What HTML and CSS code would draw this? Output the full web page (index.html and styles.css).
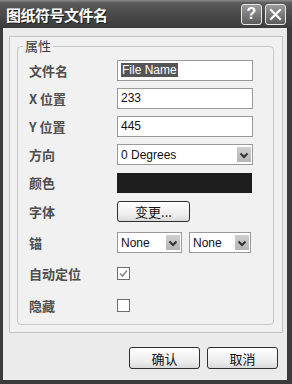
FILE: index.html
```html
<!DOCTYPE html>
<html lang="zh-CN">
<head>
    <meta charset="UTF-8">
    <meta name="viewport" content="width=device-width, initial-scale=1.0">
    <title>图纸符号文件名</title>
    <link rel="stylesheet" href="styles.css">
</head>
<body>

<div class="window">
    <div class="titlebar">
        <span class="title">图纸符号文件名</span>
        <div class="title-buttons">
            <span class="tbtn">?</span>
            <span class="tbtn">
                <svg width="13" height="13" viewBox="0 0 13 13"><path d="M2 2 L11 11 M11 2 L2 11" stroke="#fff" stroke-width="2.2" stroke-linecap="square"/></svg>
            </span>
        </div>
    </div>

    <div class="client">
        <div class="panel">
            <fieldset class="group">
                <legend>属性</legend>

                <div class="row">
                    <label>文件名</label>
                    <div class="input"><span class="selected">File Name</span></div>
                </div>
                <div class="row">
                    <label>X 位置</label>
                    <div class="input">233</div>
                </div>
                <div class="row">
                    <label>Y 位置</label>
                    <div class="input">445</div>
                </div>
                <div class="row">
                    <label>方向</label>
                    <div class="select wide">
                        <span>0 Degrees</span>
                        <span class="arrow"><svg width="14" height="14" viewBox="0 0 14 14"><path d="M3.5 5.5 L7 9 L10.5 5.5" fill="none" stroke="#333" stroke-width="2"/></svg></span>
                    </div>
                </div>
                <div class="row">
                    <label>颜色</label>
                    <div class="swatch"></div>
                </div>
                <div class="row row-font">
                    <label>字体</label>
                    <button type="button" class="btn change">变更...</button>
                </div>
                <div class="row row-anchor">
                    <label>锚</label>
                    <div class="select small-a">
                        <span>None</span>
                        <span class="arrow"><svg width="14" height="14" viewBox="0 0 14 14"><path d="M3.5 5.5 L7 9 L10.5 5.5" fill="none" stroke="#333" stroke-width="2"/></svg></span>
                    </div>
                    <div class="select small-b">
                        <span>None</span>
                        <span class="arrow"><svg width="14" height="14" viewBox="0 0 14 14"><path d="M3.5 5.5 L7 9 L10.5 5.5" fill="none" stroke="#333" stroke-width="2"/></svg></span>
                    </div>
                </div>
                <div class="row row-check">
                    <label>自动定位</label>
                    <span class="checkbox">
                        <svg width="11" height="11" viewBox="0 0 11 11"><path d="M2 5.5 L4.5 8 L9 2.5" fill="none" stroke="#8a8a8a" stroke-width="1.6"/></svg>
                    </span>
                </div>
                <div class="row row-hide">
                    <label>隐藏</label>
                    <span class="checkbox"></span>
                </div>
            </fieldset>
        </div>

        <div class="actions">
            <button type="button" class="btn">确认</button>
            <button type="button" class="btn">取消</button>
        </div>
    </div>
</div>

</body>
</html>
```

FILE: styles.css
```css
body {
    margin: 0;
    background-color: #ffffff;
    font-family: "Liberation Sans", Arial, "Noto Sans CJK SC", sans-serif;
}

.window {
    width: 292px;
    height: 384px;
    background-color: #3b3b3b;
    display: flex;
    flex-direction: column;
    box-sizing: border-box;
}

.titlebar {
    height: 28px;
    display: flex;
    align-items: center;
    justify-content: space-between;
    background: linear-gradient(#8a8a8a 0, #5a5a5a 3px, #4a4a4a 50%, #3c3c3c 100%);
}

.title {
    padding-left: 6px;
    color: #ffffff;
    font-family: "Noto Sans CJK SC", sans-serif;
    font-weight: bold;
    font-size: 15px;
    letter-spacing: -0.5px;
    text-shadow: 1px 1px 0 #1e1e1e;
}

.title-buttons {
    display: flex;
    gap: 3px;
    margin-right: 6px;
}

.tbtn {
    width: 19px;
    height: 19px;
    border: 1px solid #e8e8e8;
    border-radius: 3px;
    background: linear-gradient(#9a9a9a, #5c5c5c);
    color: #ffffff;
    font-weight: bold;
    font-size: 16px;
    display: flex;
    align-items: center;
    justify-content: center;
}

.client {
    flex: 1;
    margin: 0 5px 4px 3px;
    padding: 8px 4px 0 6px;
    background-color: #ebebeb;
}

.panel {
    height: 297px;
    box-sizing: border-box;
    border: 1px solid #c4c4c4;
    background-color: #f1f1f1;
    padding: 2px 8px 7px 7px;
}

.group {
    margin: 0;
    height: 286px;
    box-sizing: border-box;
    border: 1px solid #c8c8c8;
    border-radius: 4px;
    padding: 7px 0 0 11px;
}

.group legend {
    margin-left: -6px;
    padding: 0 2px;
    font-family: "Noto Sans CJK SC", sans-serif;
    font-size: 13px;
    line-height: 14px;
    color: #3a3a3a;
}

.row {
    display: flex;
    align-items: center;
    height: 21px;
    margin-bottom: 7px;
}

.row label {
    width: 88px;
    flex-shrink: 0;
    font-family: "Noto Sans CJK SC", sans-serif;
    font-weight: bold;
    font-size: 13px;
    color: #4e4e4e;
}

.row-font {
    margin-top: 8px;
}

.row-anchor {
    margin-top: 10px;
    gap: 7px;
}

.row-anchor label {
    margin-right: -7px;
}

.row-check {
    margin-top: 10px;
}

.row-hide {
    margin-top: 11px;
}

.input {
    width: 136px;
    height: 21px;
    box-sizing: border-box;
    border: 1px solid #9a9a9a;
    background-color: #ffffff;
    font-size: 12px;
    line-height: 19px;
    padding-left: 3px;
    color: #111111;
}

.selected {
    background-color: #555555;
    color: #ffffff;
    padding: 0 1px;
}

.select {
    height: 21px;
    box-sizing: border-box;
    border: 1px solid #9a9a9a;
    background-color: #ffffff;
    display: flex;
    align-items: center;
    justify-content: space-between;
    padding: 0 1px 0 3px;
    font-size: 12px;
    color: #111111;
}

.select.wide {
    width: 136px;
}

.select.small-a {
    width: 65px;
}

.select.small-b {
    width: 62px;
}

.arrow {
    width: 14px;
    height: 15px;
    background: linear-gradient(#cfcfcf, #b5b5b5);
    display: flex;
    align-items: center;
    justify-content: center;
}

.swatch {
    width: 135px;
    height: 20px;
    background-color: #1e1e1e;
}

.btn {
    height: 22px;
    width: 71px;
    border: 1px solid #2f2f2f;
    border-radius: 3px;
    background: linear-gradient(#ffffff, #ececec 70%, #d9d9d9);
    font-family: "Noto Sans CJK SC", sans-serif;
    font-size: 13px;
    color: #111111;
    padding: 0;
}

.btn.change {
    width: 73px;
    height: 21px;
}

.checkbox {
    width: 13px;
    height: 13px;
    box-sizing: border-box;
    border: 1px solid #6e6e6e;
    background-color: #ffffff;
    display: flex;
    align-items: center;
    justify-content: center;
}

.actions {
    display: flex;
    justify-content: flex-end;
    gap: 7px;
    padding-top: 14px;
    margin-right: 5px;
}
```
